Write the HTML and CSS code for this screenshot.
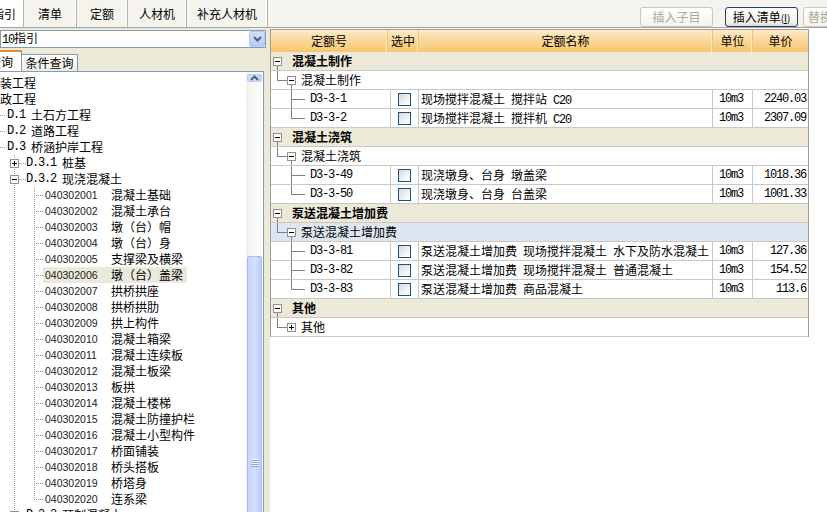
FILE: index.html
```html
<!DOCTYPE html>
<html lang="zh">
<head>
<meta charset="utf-8">
<title>定额指引</title>
<link rel="stylesheet" href="styles.css">
</head>
<body>
<div class="app">
  <header class="topbar">
    <nav class="tabs">
      <div class="tab tab-first active"><span class="clip8">指引</span></div>
      <div class="tab w53">清单</div>
      <div class="tab w51">定额</div>
      <div class="tab w59">人材机</div>
      <div class="tab w81">补充人材机</div>
    </nav>
    <div class="actions">
      <button class="btn disabled">插入子目</button>
      <button class="btn primary">插入清单<span class="acc">(<u>I</u>)</span></button>
      <button class="btn disabled cut">替换</button>
    </div>
  </header>

  <main class="main">
    <aside class="left">
      <div class="combo">
        <span class="combo-text"><span class="m">10</span>指引</span>
        <span class="combo-btn"><svg width="9" height="6" viewBox="0 0 9 6"><path d="M1 1l3.5 3.5L8 1" fill="none" stroke="#4d6185" stroke-width="2"/></svg></span>
      </div>
      <div class="qtabs">
        <div class="qtab active"><span class="clip11">查询</span></div>
        <div class="qtab">条件查询</div>
      </div>
      <div class="treebox">
        <div class="tree">
          <div class="tn la">装工程</div>
          <div class="tn la">政工程</div>
          <div class="tn lb"><span class="m">D.1</span><span class="tx">土石方工程</span></div>
          <div class="tn lb"><span class="m">D.2</span><span class="tx">道路工程</span></div>
          <div class="tn lb"><span class="m">D.3</span><span class="tx">桥涵护岸工程</span></div>
          <div class="tn lc"><svg class="tbox" width="9" height="9" viewBox="0 0 9 9"><rect x=".5" y=".5" width="8" height="8" fill="#fff" stroke="#8f8f8f"/><path d="M2 4.5h5M4.5 2v5" stroke="#000"/></svg><span class="m">D.3.1</span><span class="tx">桩基</span></div>
          <div class="tn lc"><svg class="tbox" width="9" height="9" viewBox="0 0 9 9"><rect x=".5" y=".5" width="8" height="8" fill="#fff" stroke="#8f8f8f"/><path d="M2 4.5h5" stroke="#000"/></svg><span class="m">D.3.2</span><span class="tx">现浇混凝土</span></div>
          <div class="tn ld"><span class="lbl"><span class="code">040302001</span><span>混凝土基础</span></span></div>
          <div class="tn ld"><span class="lbl"><span class="code">040302002</span><span>混凝土承台</span></span></div>
          <div class="tn ld"><span class="lbl"><span class="code">040302003</span><span>墩（台）帽</span></span></div>
          <div class="tn ld"><span class="lbl"><span class="code">040302004</span><span>墩（台）身</span></span></div>
          <div class="tn ld"><span class="lbl"><span class="code">040302005</span><span>支撑梁及横梁</span></span></div>
          <div class="tn ld"><span class="lbl sel"><span class="code">040302006</span><span>墩（台）盖梁</span></span></div>
          <div class="tn ld"><span class="lbl"><span class="code">040302007</span><span>拱桥拱座</span></span></div>
          <div class="tn ld"><span class="lbl"><span class="code">040302008</span><span>拱桥拱肋</span></span></div>
          <div class="tn ld"><span class="lbl"><span class="code">040302009</span><span>拱上构件</span></span></div>
          <div class="tn ld"><span class="lbl"><span class="code">040302010</span><span>混凝土箱梁</span></span></div>
          <div class="tn ld"><span class="lbl"><span class="code">040302011</span><span>混凝土连续板</span></span></div>
          <div class="tn ld"><span class="lbl"><span class="code">040302012</span><span>混凝土板梁</span></span></div>
          <div class="tn ld"><span class="lbl"><span class="code">040302013</span><span>板拱</span></span></div>
          <div class="tn ld"><span class="lbl"><span class="code">040302014</span><span>混凝土楼梯</span></span></div>
          <div class="tn ld"><span class="lbl"><span class="code">040302015</span><span>混凝土防撞护栏</span></span></div>
          <div class="tn ld"><span class="lbl"><span class="code">040302016</span><span>混凝土小型构件</span></span></div>
          <div class="tn ld"><span class="lbl"><span class="code">040302017</span><span>桥面铺装</span></span></div>
          <div class="tn ld"><span class="lbl"><span class="code">040302018</span><span>桥头搭板</span></span></div>
          <div class="tn ld"><span class="lbl"><span class="code">040302019</span><span>桥塔身</span></span></div>
          <div class="tn ld last"><span class="lbl"><span class="code">040302020</span><span>连系梁</span></span></div>
          <div class="tn lc"><svg class="tbox" width="9" height="9" viewBox="0 0 9 9"><rect x=".5" y=".5" width="8" height="8" fill="#fff" stroke="#8f8f8f"/><path d="M2 4.5h5M4.5 2v5" stroke="#000"/></svg><span class="m">D.3.3</span><span class="tx">预制混凝土</span></div>
        </div>
        <div class="vscroll">
          <div class="sbtn"><svg width="9" height="6" viewBox="0 0 9 6"><path d="M1 5l3.5-3.5L8 5" fill="none" stroke="#4d6185" stroke-width="2"/></svg></div>
          <div class="sthumb"><span class="grip"></span></div>
        </div>
      </div>
    </aside>

    <section class="right">
      <div class="grid">
        <div class="ghead">
          <div class="gh c1">定额号</div>
          <div class="gh c2">选中</div>
          <div class="gh c3">定额名称</div>
          <div class="gh c4">单位</div>
          <div class="gh c5">单价</div>
        </div>

        <div class="row grow"><svg class="gbox" width="9" height="9" viewBox="0 0 9 9"><rect x=".5" y=".5" width="8" height="8" fill="#fff" stroke="#8f8f8f"/><path d="M2 4.5h5" stroke="#000"/></svg><span class="gt">混凝土制作</span></div>
        <div class="row srow open"><svg class="gbox" width="9" height="9" viewBox="0 0 9 9"><rect x=".5" y=".5" width="8" height="8" fill="#fff" stroke="#8f8f8f"/><path d="M2 4.5h5" stroke="#000"/></svg><span class="st">混凝土制作</span></div>
        <div class="row drow"><div class="cell c1 code-cell"><span class="m">D3-3-1</span></div><div class="cell c2"><span class="chk"></span></div><div class="cell c3 nm">现场搅拌混凝土 搅拌站 <span class="m">C20</span></div><div class="cell c4"><span class="m">10m3</span></div><div class="cell c5"><span class="m">2240.03</span></div></div>
        <div class="row drow last"><div class="cell c1 code-cell"><span class="m">D3-3-2</span></div><div class="cell c2"><span class="chk"></span></div><div class="cell c3 nm">现场搅拌混凝土 搅拌机 <span class="m">C20</span></div><div class="cell c4"><span class="m">10m3</span></div><div class="cell c5"><span class="m">2307.09</span></div></div>

        <div class="row grow"><svg class="gbox" width="9" height="9" viewBox="0 0 9 9"><rect x=".5" y=".5" width="8" height="8" fill="#fff" stroke="#8f8f8f"/><path d="M2 4.5h5" stroke="#000"/></svg><span class="gt">混凝土浇筑</span></div>
        <div class="row srow open"><svg class="gbox" width="9" height="9" viewBox="0 0 9 9"><rect x=".5" y=".5" width="8" height="8" fill="#fff" stroke="#8f8f8f"/><path d="M2 4.5h5" stroke="#000"/></svg><span class="st">混凝土浇筑</span></div>
        <div class="row drow"><div class="cell c1 code-cell"><span class="m">D3-3-49</span></div><div class="cell c2"><span class="chk"></span></div><div class="cell c3 nm">现浇墩身、台身 墩盖梁</div><div class="cell c4"><span class="m">10m3</span></div><div class="cell c5"><span class="m">1018.36</span></div></div>
        <div class="row drow last"><div class="cell c1 code-cell"><span class="m">D3-3-50</span></div><div class="cell c2"><span class="chk"></span></div><div class="cell c3 nm">现浇墩身、台身 台盖梁</div><div class="cell c4"><span class="m">10m3</span></div><div class="cell c5"><span class="m">1001.33</span></div></div>

        <div class="row grow"><svg class="gbox" width="9" height="9" viewBox="0 0 9 9"><rect x=".5" y=".5" width="8" height="8" fill="#fff" stroke="#8f8f8f"/><path d="M2 4.5h5" stroke="#000"/></svg><span class="gt">泵送混凝土增加费</span></div>
        <div class="row srow open selrow"><svg class="gbox" width="9" height="9" viewBox="0 0 9 9"><rect x=".5" y=".5" width="8" height="8" fill="#fff" stroke="#8f8f8f"/><path d="M2 4.5h5" stroke="#000"/></svg><span class="st">泵送混凝土增加费</span></div>
        <div class="row drow"><div class="cell c1 code-cell"><span class="m">D3-3-81</span></div><div class="cell c2"><span class="chk"></span></div><div class="cell c3 nm">泵送混凝土增加费 现场搅拌混凝土 水下及防水混凝土</div><div class="cell c4"><span class="m">10m3</span></div><div class="cell c5"><span class="m">127.36</span></div></div>
        <div class="row drow"><div class="cell c1 code-cell"><span class="m">D3-3-82</span></div><div class="cell c2"><span class="chk"></span></div><div class="cell c3 nm">泵送混凝土增加费 现场搅拌混凝土 普通混凝土</div><div class="cell c4"><span class="m">10m3</span></div><div class="cell c5"><span class="m">154.52</span></div></div>
        <div class="row drow last"><div class="cell c1 code-cell"><span class="m">D3-3-83</span></div><div class="cell c2"><span class="chk"></span></div><div class="cell c3 nm">泵送混凝土增加费 商品混凝土</div><div class="cell c4"><span class="m">10m3</span></div><div class="cell c5"><span class="m">113.6</span></div></div>

        <div class="row grow"><svg class="gbox" width="9" height="9" viewBox="0 0 9 9"><rect x=".5" y=".5" width="8" height="8" fill="#fff" stroke="#8f8f8f"/><path d="M2 4.5h5" stroke="#000"/></svg><span class="gt">其他</span></div>
        <div class="row srow"><svg class="gbox" width="9" height="9" viewBox="0 0 9 9"><rect x=".5" y=".5" width="8" height="8" fill="#fff" stroke="#8f8f8f"/><path d="M2 4.5h5M4.5 2v5" stroke="#000"/></svg><span class="st">其他</span></div>
      </div>
    </section>
  </main>
</div>
</body>
</html>
```

FILE: styles.css
```css
* { box-sizing: border-box; margin: 0; padding: 0; }
html, body { width: 827px; height: 512px; overflow: hidden; }
body {
  font: 12px/16px "Noto Sans CJK SC", "Liberation Sans", sans-serif;
  color: #000;
  background: #fff;
}
.m {
  font-family: "Liberation Mono", monospace;
  font-size: 12px;
  letter-spacing: -1.2px;
}

.app { width: 827px; height: 512px; display: flex; flex-direction: column; overflow: hidden; }

/* ---------- top bar ---------- */
.topbar {
  height: 28px;
  flex: none;
  display: flex;
  background: #f4f3ee;
  border-bottom: 1px solid #a5a39a;
  overflow: hidden;
}
.tabs { display: flex; height: 27px; flex: none; }
.tab {
  height: 27px;
  display: flex;
  align-items: center;
  justify-content: center;
  border-right: 1px solid #b6b3a6;
  box-shadow: inset -1px 0 0 #fff;
  white-space: nowrap;
  overflow: hidden;
  flex: none;
}
.tab.active { background: #fff; }
.tab-first { width: 24px; justify-content: flex-start; }
.clip8 { margin-left: -8px; }
.w53 { width: 53px; }
.w51 { width: 51px; }
.w59 { width: 59px; }
.w81 { width: 81px; }

.actions { display: flex; margin-left: 372px; padding-top: 7px; flex: none; }
.btn {
  height: 20px;
  width: 73px;
  flex: none;
  border: 1px solid #c9c7ba;
  border-radius: 3px;
  background: linear-gradient(#fefefe, #f4f3ee);
  font: 12px/18px "Noto Sans CJK SC", sans-serif;
  color: #aca899;
  text-align: center;
}
.btn.primary {
  margin-left: 12px;
  border-color: #1f3f6f;
  color: #000;
  background: linear-gradient(#ffffff, #f3f2ec 80%, #dcd8cb);
}
.btn.cut { margin-left: 5px; width: 60px; text-align: left; padding-left: 4px; }
.acc { font-size: 10px; }

/* ---------- main ---------- */
.main { flex: 1; display: flex; background: #ece9d8; min-height: 0; }

.left { width: 266px; flex: none; display: flex; flex-direction: column; }
.combo {
  margin-top: 2px;
  height: 18px;
  width: 266px;
  border: 1px solid #7f9db9;
  background: #fff;
  display: flex;
  align-items: center;
}
.combo-text { flex: 1; line-height: 16px; padding-left: 1px; }
.combo-btn {
  width: 16px;
  height: 16px;
  border: 1px solid #b4c8f6;
  border-radius: 2px;
  background: linear-gradient(#d2defc, #b6cbf7);
  display: flex;
  align-items: center;
  justify-content: center;
}

.qtabs { display: flex; align-items: flex-end; height: 21px; margin-top: 2px; }
.qtab {
  height: 17px;
  width: 56px;
  border: 1px solid #919b9c;
  border-bottom: 0;
  border-left: 0;
  background: linear-gradient(#ffffff, #ecebe5);
  display: flex;
  align-items: center;
  justify-content: center;
  line-height: 16px;
}
.qtab.active {
  width: 22px;
  height: 21px;
  background: #fff;
  border-top: 2px solid #e68b2c;
  justify-content: flex-start;
  overflow: hidden;
  white-space: nowrap;
}
.clip11 { margin-left: -11px; }

.treebox {
  flex: 1;
  width: 264px;
  min-height: 0;
  display: flex;
  border: 1px solid #7f9db9;
  border-left: 0;
  border-bottom: 0;
  background: #fff;
  overflow: hidden;
}
.tree { flex: 1; padding-top: 3px; overflow: hidden; }

.tn {
  height: 16px;
  line-height: 16px;
  white-space: nowrap;
  display: flex;
  align-items: center;
  background-repeat: no-repeat;
}
.tx { margin-left: 6px; }

/* dotted connector lines drawn as backgrounds */
.lb {
  padding-left: 7px;
  background-image: repeating-linear-gradient(90deg, #9a9a9a 0 1px, transparent 1px 2px);
  background-size: 6px 1px;
  background-position: 0 8px;
}
.lc {
  padding-left: 10px;
  background-image:
    repeating-linear-gradient(180deg, #9a9a9a 0 1px, transparent 1px 2px),
    repeating-linear-gradient(90deg, #9a9a9a 0 1px, transparent 1px 2px);
  background-size: 1px 16px, 7px 1px;
  background-position: 14px 0, 19px 8px;
}
.lc .tbox { flex: none; margin-right: 7px; }
.ld {
  background-image:
    repeating-linear-gradient(180deg, #9a9a9a 0 1px, transparent 1px 2px),
    repeating-linear-gradient(180deg, #9a9a9a 0 1px, transparent 1px 2px),
    repeating-linear-gradient(90deg, #9a9a9a 0 1px, transparent 1px 2px);
  background-size: 1px 16px, 1px 16px, 9px 1px;
  background-position: 14px 0, 34px 0, 34px 8px;
}
.ld.last { background-size: 1px 16px, 1px 9px, 9px 1px; }
.lbl { margin-left: 43px; padding: 0 4px 0 2px; display: flex; height: 16px; }
.lbl.sel { background: #ebe8dc; }
.code {
  width: 66px;
  flex: none;
  font-family: "Liberation Sans", sans-serif;
  font-size: 10.5px;
  color: #1a1a1a;
}

.vscroll {
  width: 17px;
  flex: none;
  background: linear-gradient(90deg, #f3f1ec, #fefefe);
  display: flex;
  flex-direction: column;
  align-items: center;
  padding-top: 2px;
}
.sbtn {
  width: 15px;
  height: 16px;
  border: 1px solid #bacdf5;
  border-radius: 2px;
  background: linear-gradient(90deg, #c8d7fc, #d8e3fd 50%, #bfd0f8);
  display: flex;
  align-items: center;
  justify-content: center;
}
.sthumb {
  margin-top: 174px;
  width: 15px;
  height: 414px;
  flex: none;
  border: 1px solid #a6bdf1;
  border-radius: 2px;
  background: linear-gradient(90deg, #c6d5fb, #d4e0fd 50%, #bccef8);
  display: flex;
  align-items: center;
  justify-content: center;
}
.grip {
  width: 7px;
  height: 8px;
  background: repeating-linear-gradient(180deg, #eef3fe 0 1px, #8aa5e3 1px 2px);
}

/* ---------- grid ---------- */
.right { flex: 1; background: #fff; margin-left: 4px; }
.grid {
  margin-top: 1px;
  width: 539px;
  border: 1px solid #a09e96;
  border-bottom: 0;
}
.ghead {
  display: flex;
  height: 22px;
  background: linear-gradient(#fdebc9, #fad89a 45%, #f6c66e);
}
.gh {
  line-height: 22px;
  text-align: center;
  border-right: 1px solid #e9c788;
  box-shadow: inset -1px 0 0 #fde8c0;
  flex: none;
}
.c1 { width: 120px; }
.c2 { width: 28px; }
.c3 { width: 294px; }
.c4 { width: 40px; }
.c5 { width: 55px; }
.ghead .c1 { width: 117px; }
.ghead .c2 { width: 31px; }
.gh.c5 { border-right: 0; box-shadow: none; }

.row {
  height: 19px;
  border-bottom: 1px solid #c8c8c8;
  display: flex;
  align-items: center;
  background-repeat: no-repeat;
  line-height: 18px;
}
.gbox { flex: none; display: block; }

.grow {
  padding-left: 2px;
  font-weight: bold;
  background-color: #ece9d8;
  background-image: linear-gradient(#808080, #808080);
  background-size: 1px 6px;
  background-position: 6px 13px;
}
.gt { margin-left: 10px; }

.srow {
  padding-left: 16px;
  background-color: #fff;
  background-image: linear-gradient(#808080, #808080), linear-gradient(#808080, #808080);
  background-size: 1px 9px, 10px 1px;
  background-position: 6px 0, 6px 9px;
}
.srow.open {
  background-image: linear-gradient(#808080, #808080), linear-gradient(#808080, #808080), linear-gradient(#808080, #808080);
  background-size: 1px 9px, 10px 1px, 1px 6px;
  background-position: 6px 0, 6px 9px, 20px 13px;
}
.srow.selrow { background-color: #dde5f1; }
.st { margin-left: 5px; }

.cell {
  height: 18px;
  flex: none;
  border-right: 1px solid #c8c8c8;
  display: flex;
  align-items: center;
  white-space: nowrap;
  overflow: hidden;
}
.cell.c5 { border-right: 0; justify-content: flex-end; padding-right: 2px; }
.code-cell {
  padding-left: 39px;
  background-image: linear-gradient(#808080, #808080), linear-gradient(#808080, #808080);
  background-size: 1px 18px, 14px 1px;
  background-position: 20px 0, 20px 9px;
  background-repeat: no-repeat;
}
.last .code-cell { background-size: 1px 10px, 14px 1px; }
.c2.cell { justify-content: center; }
.chk {
  width: 13px;
  height: 13px;
  border: 1px solid #1c5180;
  background: linear-gradient(135deg, #d6d8dc, #f6f7f9 70%, #fff);
}
.cell.nm {
  display: block;
  line-height: 18px;
  padding-left: 2px;
  word-spacing: 3.3px;
}
.c4.cell { padding-left: 6px; }
```
